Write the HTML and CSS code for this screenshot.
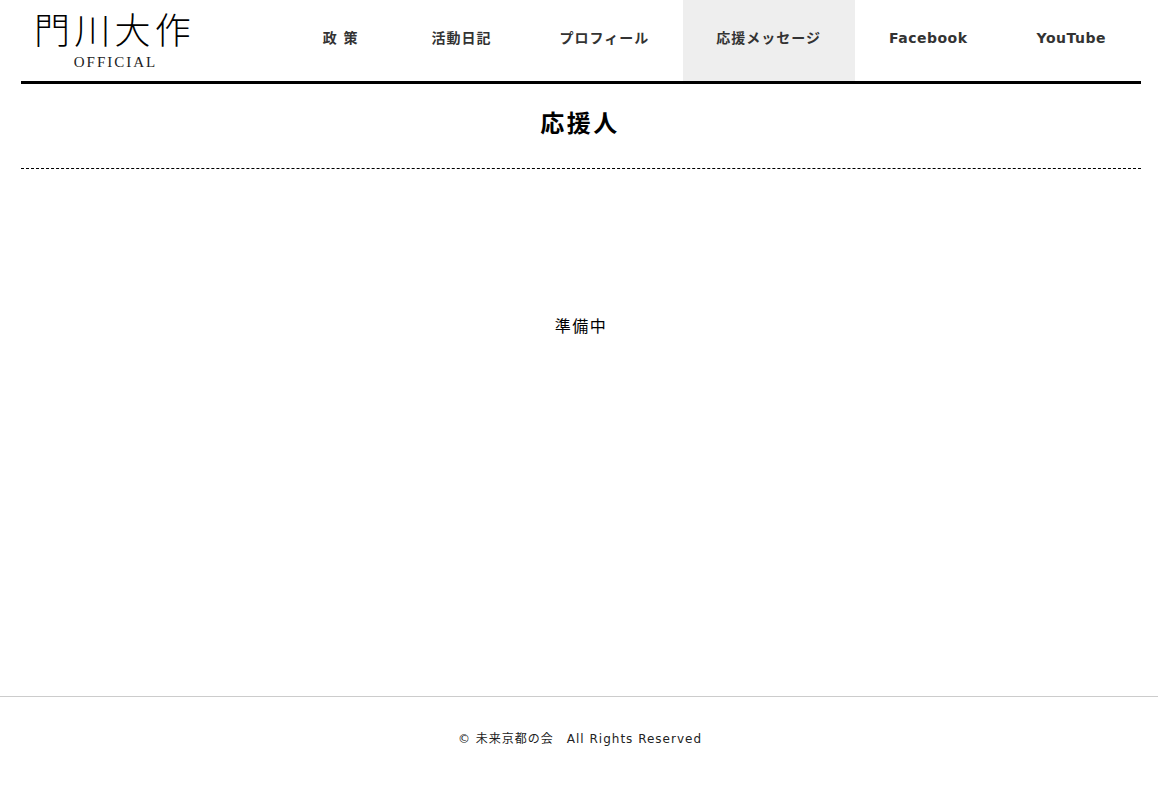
FILE: index.html
```html
<!DOCTYPE html>
<html lang="ja">
<head>
    <meta charset="UTF-8">
    <meta name="viewport" content="width=device-width, initial-scale=1.0">
    <title>応援人 | 門川大作 OFFICIAL</title>
    <link rel="stylesheet" href="styles.css">
</head>
<body>
    <header class="site-header">
        <a class="logo" href="#">
            <span class="logo-name">門川大作</span>
            <span class="logo-sub">OFFICIAL</span>
        </a>
        <nav class="global-nav">
            <a class="first" href="#">政 策</a>
            <a href="#">活動日記</a>
            <a href="#">プロフィール</a>
            <a class="current" href="#">応援メッセージ</a>
            <a class="latin" href="#">Facebook</a>
            <a class="latin" href="#">YouTube</a>
        </nav>
    </header>

    <main class="content">
        <h1 class="page-title">応援人</h1>
        <p class="preparing">準備中</p>
    </main>

    <footer class="site-footer">
        <p>© 未来京都の会　All Rights Reserved</p>
    </footer>
</body>
</html>
```
FILE: styles.css
```css
body {
    margin: 0;
    font-family: "DejaVu Sans", "Noto Sans CJK JP", sans-serif;
    color: #000;
    background-color: #fff;
}

a {
    color: inherit;
    text-decoration: none;
}

.site-header {
    display: flex;
    justify-content: space-between;
    width: 1120px;
    height: 81px;
    margin-left: 21px;
    border-bottom: 3px solid #000;
}

.logo {
    display: flex;
    flex-direction: column;
    align-items: center;
    width: 155px;
    margin-left: 16px;
    padding-top: 11px;
}

.logo-name {
    font-family: "Liberation Serif", "Noto Sans CJK JP", sans-serif;
    font-weight: 300;
    font-size: 36px;
    line-height: 42px;
    letter-spacing: 4.3px;
    white-space: nowrap;
}

.logo-sub {
    margin-left: 2px;
    font-family: "Liberation Serif", serif;
    font-size: 15px;
    line-height: 18px;
    letter-spacing: 2px;
    color: #222;
}

.global-nav {
    display: flex;
}

.global-nav a {
    display: flex;
    align-items: center;
    padding: 0 34px 7px;
    font-size: 14px;
    font-weight: bold;
    letter-spacing: 1px;
    color: #333;
}

.global-nav a.first {
    padding-right: 39px;
}

.global-nav a.latin {
    padding-bottom: 5px;
    letter-spacing: 0.5px;
}

.global-nav a.latin:last-child {
    padding-left: 35px;
    padding-right: 35px;
}

.global-nav a.current {
    padding-left: 33px;
    background-color: #eee;
}

.page-title {
    margin: 0;
    padding-right: 2px;
    height: 84px;
    line-height: 80px;
    font-size: 24px;
    letter-spacing: 2.5px;
    text-align: center;
    border-bottom: 1px dashed #000;
}

.content {
    width: 1120px;
    height: 612px;
    margin-left: 21px;
}

.preparing {
    margin: 148px 0 0;
    font-size: 16px;
    line-height: 20px;
    letter-spacing: 1.5px;
    text-align: center;
}

.site-footer {
    height: 104px;
    border-top: 1px solid #ccc;
}

.site-footer p {
    margin: 34px 0 0;
    padding-left: 2px;
    font-size: 12px;
    line-height: 16px;
    letter-spacing: 1px;
    text-align: center;
    color: #222;
}
```
